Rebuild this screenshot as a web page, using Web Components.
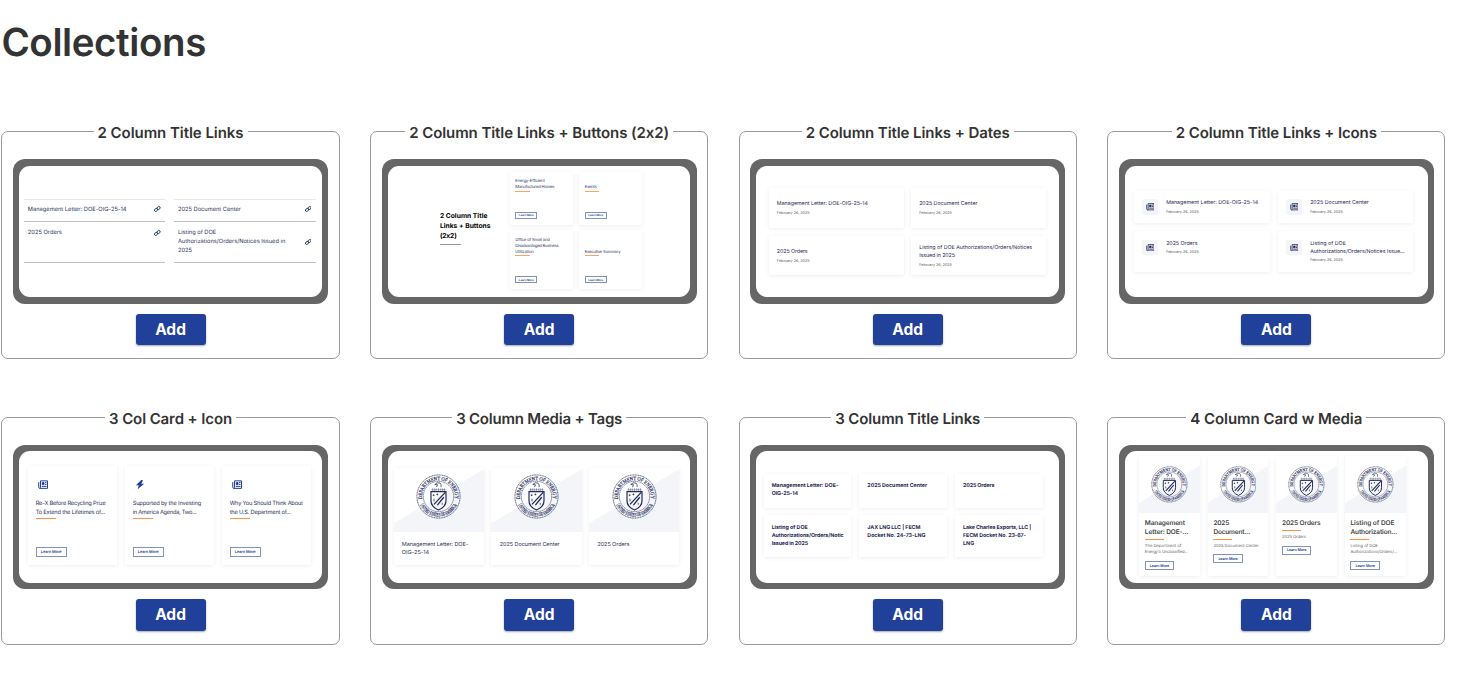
<!DOCTYPE html>
<html lang="en">
<head>
<meta charset="utf-8">
<title>Collections</title>
<style>
  body {
    margin: 0;
    background: #fff;
    color: #333;
    font-family: Inter, "Open Sans", sans-serif;
    text-rendering: geometricPrecision;
  }
</style>
</head>
<body>
<collections-page>
  <collection-card label="2 Column Title Links" w="146"><title-links></title-links></collection-card>
  <collection-card label="2 Column Title Links + Buttons (2x2)" w="261.5"><button-links></button-links></collection-card>
  <collection-card label="2 Column Title Links + Dates" w="204"><date-links></date-links></collection-card>
  <collection-card label="2 Column Title Links + Icons" w="201"><icon-links></icon-links></collection-card>
  <collection-card label="3 Col Card + Icon" w="123"><icon-cards></icon-cards></collection-card>
  <collection-card label="3 Column Media + Tags" w="166"><media-tags></media-tags></collection-card>
  <collection-card label="3 Column Title Links" w="145"><title-cards></title-cards></collection-card>
  <collection-card label="4 Column Card w Media" w="172"><media-cards></media-cards></collection-card>
</collections-page>

<script>
// Registers an element whose shadow root never changes.
function define(name, style, html) {
  customElements.define(name, class extends HTMLElement {
    constructor() {
      super();
      this.attachShadow({mode: 'open'});
      this.shadowRoot.innerHTML = `<style>${style}</style>${html}`;
    }
  });
}

const line = (w, text) => `<fit-line w="${w}">${text}</fit-line>`;

define('collections-page', `
  :host {
    display: block;
    padding-left: 1.4px;
  }
  h1 {
    margin: 0;
    padding: 19.2px 0 0;
    height: 102.8px;
    font-size: 38.5px;
    line-height: 48px;
    font-weight: 600;
  }
  main {
    display: grid;
    grid-template-columns: repeat(4, 338.3px);
    gap: 48.6px 30.3px;
  }
`, `
  <h1>${line(204.5, 'Collections')}</h1>
  <main><slot></slot></main>
`);

customElements.define('collection-card', class extends HTMLElement {
  constructor() {
    super();
    this.attachShadow({mode: 'open'});
  }

  connectedCallback() {
    this.shadowRoot.innerHTML = `
      <style>
        :host {
          display: block;
        }
        fieldset {
          box-sizing: border-box;
          height: 237px;
          min-inline-size: 0;
          margin: 0;
          padding: 17.3px 10.6px 0;
          border: 1px solid #999;
          border-radius: 7px;
        }
        legend {
          margin: 0 auto;
          padding: 1px 4px 0;
          font-size: 15px;
          line-height: 19px;
          font-weight: 600;
        }
        .frame {
          box-sizing: border-box;
          height: 144.5px;
          padding: 6.3px;
          border-radius: 12px;
          background: #666;
        }
        .screen {
          height: 100%;
          overflow: hidden;
          border-radius: 11px;
          background: #fff;
        }
        button {
          display: block;
          width: 70px;
          height: 31.5px;
          margin: 10.1px auto 0;
          padding: 0 0 1px;
          border: 0;
          border-radius: 3px;
          background: #204099;
          box-shadow: 0 1px 2px rgba(0, 0, 0, 0.35);
          color: #fff;
          font: 700 15.5px Inter, sans-serif;
        }
      </style>
      <fieldset>
        <legend>${line(this.getAttribute('w'), this.getAttribute('label'))}</legend>
        <div class="frame"><div class="screen"><slot></slot></div></div>
        <button>Add</button>
      </fieldset>
    `;
  }
});

define('white-card', `
  :host {
    display: flex;
    flex-direction: column;
    box-sizing: border-box;
    overflow: hidden;
    border-radius: 1.5px;
    background: #fff;
    box-shadow: 0 1px 4px rgba(0, 0, 0, 0.075);
  }
`, '<slot></slot>');

define('orange-rule', `
  :host {
    display: block;
    flex: none;
    width: var(--rule-width, 20px);
    height: 1px;
    background: var(--rule-color, #fb9344);
  }
`, '');

define('learn-more', `
  :host {
    display: flex;
    flex: none;
    align-items: center;
    justify-content: center;
    box-sizing: border-box;
    border: 0.7px solid #8291c5;
    color: #203f94;
    font-weight: 600;
    line-height: 1;
  }
`, '<slot></slot>');

define('link-icon', `
  :host {
    display: block;
    width: 6.6px;
    height: 6px;
  }
  svg {
    display: block;
    width: 100%;
    height: 100%;
  }
`, `
  <svg viewBox="0 0 22 20" fill="none" stroke="#17365d" stroke-width="3">
    <rect x="1" y="9" width="12" height="8" rx="4" transform="rotate(-35 7 13)"/>
    <rect x="9" y="3" width="12" height="8" rx="4" transform="rotate(-35 15 7)"/>
  </svg>
`);

define('news-icon', `
  :host {
    display: block;
    color: #204099;
  }
  svg {
    display: block;
    width: 100%;
    height: 100%;
  }
`, `
  <svg viewBox="0 0 20 18" fill="none" stroke="currentColor" stroke-width="2">
    <path d="M5 1.5h14v15H3.2Q5 16 5 14zM1.5 4v10q0 2 1.5 2.5"/>
    <path d="M8.5 5h3.5v4H8.5z" fill="currentColor"/>
    <path d="M14 5h3M14 8.5h3M7.5 12.5h9.5"/>
  </svg>
`);

define('bolt-icon', `
  :host {
    display: block;
    color: #204099;
  }
  svg {
    display: block;
    width: 100%;
    height: 100%;
  }
`, `
  <svg viewBox="0 0 14 18" fill="currentColor">
    <path d="M9.5 0L-1 10.5h5.5L2.5 18L15 7.5H9.5L13 0.5z"/>
  </svg>
`);

define('energy-seal', `
  :host {
    display: block;
  }
  svg {
    display: block;
    width: 100%;
    height: 100%;
    font: 400 14px "Liberation Serif", serif;
  }
`, `
  <svg viewBox="0 0 120 120" fill="none" stroke="#252b58">
    <defs>
      <path id="north" d="M16.5 67A44 44 0 1 1 103.5 67"/>
      <path id="south" d="M11 82A54 54 0 0 0 109 82"/>
    </defs>
    <circle cx="60" cy="60" r="57.5" stroke-width="2.2" stroke-dasharray="3 1.5"/>
    <circle cx="60" cy="60" r="40.5" stroke-width="1.5" stroke-dasharray="4 1"/>
    <g fill="#252b58" stroke="#252b58" stroke-width="0.5">
      <text textLength="150" lengthAdjust="spacingAndGlyphs"><textPath href="#north">DEPARTMENT OF ENERGY</textPath></text>
      <text textLength="122" lengthAdjust="spacingAndGlyphs"><textPath href="#south">UNITED STATES OF AMERICA</textPath></text>
    </g>
    <path d="M40 47h40v24q0 16-20 25q-20-9-20-25z" stroke-width="3.2"/>
    <path d="M48 81L78 49M57 83L74 62" stroke-width="3.5"/>
    <path d="M47 54v5M44.5 56.5h5M57 52v5M54.5 54.5h5M48 66v7M70 77v5" stroke-width="2"/>
    <path d="M41 42h38M44 38v7M49 38v7M54 38v7M60 38v7M66 38v7M71 38v7M76 38v7" stroke-width="1.5" opacity="0.7"/>
    <path d="M50 28q6-7 14-4q4 3 3 11M50 28l8 1M57 29q-1 4-3 6" stroke-width="2"/>
  </svg>
`);

// Media area: pale diagonal wedge with the seal over it.
define('seal-media', `
  :host {
    display: flex;
    flex: none;
    justify-content: center;
    align-items: flex-start;
    box-sizing: border-box;
    padding-top: var(--seal-top);
    background: var(--wedge);
  }
  energy-seal {
    width: var(--seal-size);
    height: var(--seal-size);
  }
`, '<energy-seal></energy-seal>');

define('title-links', `
  :host {
    display: grid;
    grid-template-columns: 141.8px 141.8px;
    grid-template-rows: 23px 41.1px;
    column-gap: 8.3px;
    padding: 33px 0 0 4.4px;
    font-size: 5.7px;
    line-height: 9px;
    color: #2b3260;
  }
  div {
    box-sizing: border-box;
    display: flex;
    align-items: flex-start;
    justify-content: space-between;
    padding: 6.8px 4.4px 0 4.2px;
    border-bottom: 0.8px solid #bfc1c3;
  }
  div:nth-of-type(-n+2) {
    padding-top: 5.6px;
    border-top: 0.8px solid #e9e9e9;
  }
  link-icon {
    margin-top: 1.3px;
  }
  .mid {
    margin-top: 10.2px;
  }
`, `
  <div>${line(98.7, 'Management Letter: DOE-OIG-25-14')}<link-icon></link-icon></div>
  <div>${line(63, '2025 Document Center')}<link-icon></link-icon></div>
  <div>${line(34, '2025 Orders')}<link-icon></link-icon></div>
  <div>
    <section>
      ${line(38.3, 'Listing of DOE')}
      ${line(107.3, 'Authorizations/Orders/Notices Issued in')}
      ${line(14, '2025')}
    </section>
    <link-icon class="mid"></link-icon>
  </div>
`);

define('button-links', `
  :host {
    display: grid;
    grid-template-columns: 63.7px 63.3px 63px;
    grid-template-rows: 52.5px 59.5px;
    gap: 5.2px 6px;
    padding: 6.7px 0 0 52px;
  }
  header {
    grid-row: 1 / 3;
    padding-top: 38.8px;
    color: #000;
    font-size: 6.7px;
    line-height: 10.1px;
    font-weight: 700;
  }
  header orange-rule {
    --rule-width: 21.3px;
    --rule-color: #8e97b4;
    margin-top: 2.3px;
  }
  white-card {
    justify-content: flex-end;
    padding: 0 5.8px 6px;
    font-size: 4.1px;
    line-height: 6px;
    color: #2b3260;
  }
  white-card orange-rule {
    --rule-width: 14.2px;
    margin: 0.5px 0 20.2px;
    opacity: 0.85;
  }
  learn-more {
    width: 22px;
    height: 7px;
    font-size: 2.9px;
  }
`, `
  <header>
    ${line(47.7, '2 Column Title')}
    ${line(50.7, 'Links + Buttons')}
    ${line(17.3, '(2x2)')}
    <orange-rule></orange-rule>
  </header>
  <white-card>
    ${line(29.3, 'Energy-Efficient')}
    ${line(39, 'Manufactured Homes')}
    <orange-rule></orange-rule>
    <learn-more>${line(15, 'Learn More')}</learn-more>
  </white-card>
  <white-card>
    ${line(12, 'Events')}
    <orange-rule></orange-rule>
    <learn-more>${line(15, 'Learn More')}</learn-more>
  </white-card>
  <white-card>
    ${line(34.3, 'Office of Small and')}
    ${line(43, 'Disadvantaged Business')}
    ${line(18.3, 'Utilization')}
    <orange-rule></orange-rule>
    <learn-more>${line(15, 'Learn More')}</learn-more>
  </white-card>
  <white-card>
    ${line(35.7, 'Executive Summary')}
    <orange-rule></orange-rule>
    <learn-more>${line(15, 'Learn More')}</learn-more>
  </white-card>
`);

const DATE = `<small>${line(32.7, 'February 26, 2025')}</small>`;

define('date-links', `
  :host {
    display: grid;
    grid-template-columns: 135px 134.7px;
    grid-template-rows: 40px 39.3px;
    gap: 8.2px 7.3px;
    padding: 22.3px 0 0 12.4px;
    font-size: 5.3px;
    line-height: 7.9px;
    color: #1f2756;
  }
  white-card {
    justify-content: center;
    padding: 1.2px 0 0 8px;
  }
  small {
    font-size: 3.8px;
    line-height: 7.4px;
    color: #555;
  }
`, `
  <white-card>${line(91, 'Management Letter: DOE-OIG-25-14')}${DATE}</white-card>
  <white-card>${line(58.3, '2025 Document Center')}${DATE}</white-card>
  <white-card>${line(30.7, '2025 Orders')}${DATE}</white-card>
  <white-card>
    ${line(113, 'Listing of DOE Authorizations/Orders/Notices')}
    ${line(35.7, 'Issued in 2025')}
    ${DATE}
  </white-card>
`);

define('icon-links', `
  :host {
    display: grid;
    grid-template-columns: 136px 135.7px;
    grid-template-rows: 32.5px 41px;
    gap: 7.8px 8px;
    padding: 25.3px 0 0 8.7px;
    font-size: 5.3px;
    line-height: 8.4px;
    color: #1f2756;
  }
  white-card {
    flex-direction: row;
    padding: 8.4px 0 0 8.2px;
  }
  .tile {
    display: grid;
    place-items: center;
    flex: none;
    width: 16px;
    height: 15.7px;
    margin-right: 8.2px;
    border-radius: 1.5px;
    background: #f4f5f9;
  }
  news-icon {
    width: 8.5px;
    height: 7.5px;
    color: #252b58;
  }
  small {
    display: block;
    font-size: 3.8px;
    color: #555;
  }
`, `
  <white-card>
    <div class="tile"><news-icon></news-icon></div>
    <div>${line(92, 'Management Letter: DOE-OIG-25-14')}${DATE}</div>
  </white-card>
  <white-card>
    <div class="tile"><news-icon></news-icon></div>
    <div>${line(58.7, '2025 Document Center')}${DATE}</div>
  </white-card>
  <white-card>
    <div class="tile"><news-icon></news-icon></div>
    <div>${line(31.3, '2025 Orders')}${DATE}</div>
  </white-card>
  <white-card>
    <div class="tile"><news-icon></news-icon></div>
    <div>
      ${line(35.7, 'Listing of DOE')}
      ${line(94.3, 'Authorizations/Orders/Notices Issue...')}
      ${DATE}
    </div>
  </white-card>
`);

define('icon-cards', `
  :host {
    display: grid;
    grid-template-columns: repeat(3, 89px);
    grid-template-rows: 99.3px;
    column-gap: 8px;
    padding: 14.4px 0 0 8.4px;
    font-size: 5.7px;
    line-height: 8.6px;
    color: #2b3260;
  }
  white-card {
    padding: 14.2px 8px 0;
  }
  news-icon, bolt-icon {
    flex: none;
    width: 10px;
    height: 9.2px;
    margin: 0 0 11.2px 2.3px;
  }
  orange-rule {
    margin: 0.3px 0 28px;
  }
  learn-more {
    width: 31px;
    height: 10.2px;
    font-size: 3.9px;
  }
`, `
  <white-card>
    <news-icon></news-icon>
    ${line(70, 'Re-X Before Recycling Prize')}
    ${line(69.3, 'To Extend the Lifetimes of...')}
    <orange-rule></orange-rule>
    <learn-more>${line(20.7, 'Learn More')}</learn-more>
  </white-card>
  <white-card>
    <bolt-icon></bolt-icon>
    ${line(68.3, 'Supported by the Investing')}
    ${line(63.7, 'in America Agenda, Two...')}
    <orange-rule></orange-rule>
    <learn-more>${line(20.7, 'Learn More')}</learn-more>
  </white-card>
  <white-card>
    <news-icon></news-icon>
    ${line(73, 'Why You Should Think About')}
    ${line(61, 'the U.S. Department of...')}
    <orange-rule></orange-rule>
    <learn-more>${line(20.7, 'Learn More')}</learn-more>
  </white-card>
`);

define('media-tags', `
  :host {
    display: grid;
    grid-template-columns: repeat(3, 90.2px);
    grid-template-rows: 96.7px;
    column-gap: 7.6px;
    padding: 17px 0 0 5.7px;
    font-size: 5.5px;
    line-height: 8.4px;
    color: #2b3260;
  }
  seal-media {
    height: 63.7px;
    margin-bottom: 9.2px;
    --seal-top: 5.5px;
    --seal-size: 45px;
    --wedge: linear-gradient(149deg, #fff 46.5%, #f4f5f9 47%);
  }
  fit-line {
    margin-left: 8.3px;
  }
`, `
  <white-card>
    <seal-media></seal-media>
    ${line(66.3, 'Management Letter: DOE-')}
    ${line(27.3, 'OIG-25-14')}
  </white-card>
  <white-card><seal-media></seal-media>${line(60, '2025 Document Center')}</white-card>
  <white-card><seal-media></seal-media>${line(32, '2025 Orders')}</white-card>
`);

define('title-cards', `
  :host {
    display: grid;
    grid-template-columns: repeat(3, 87.8px);
    grid-template-rows: 34px 41.7px;
    gap: 7.7px 7.9px;
    padding: 22.4px 0 0 7.2px;
    font-size: 5.3px;
    line-height: 8.3px;
    font-weight: 700;
    color: #1f2756;
  }
  white-card {
    padding: 8.6px 7.5px 0 8px;
  }
`, `
  <white-card>${line(66.7, 'Management Letter: DOE-')}${line(26.3, 'OIG-25-14')}</white-card>
  <white-card>${line(59.7, '2025 Document Center')}</white-card>
  <white-card>${line(31.3, '2025 Orders')}</white-card>
  <white-card>
    ${line(36, 'Listing of DOE')}
    ${line(72, 'Authorizations/Orders/Notic')}
    ${line(36.3, 'Issued in 2025')}
  </white-card>
  <white-card>${line(53, 'JAX LNG LLC | FECM')}${line(58, 'Docket No. 24-73-LNG')}</white-card>
  <white-card>
    ${line(68, 'Lake Charles Exports, LLC |')}
    ${line(63, 'FECM Docket No. 23-67-')}
    ${line(11.3, 'LNG')}
  </white-card>
`);

define('media-cards', `
  :host {
    display: grid;
    grid-template-columns: repeat(4, 60.9px);
    grid-template-rows: 120.6px;
    column-gap: 7.65px;
    padding: 4.4px 0 0 14px;
  }
  seal-media {
    height: 57px;
    margin-bottom: 6.5px;
    --seal-top: 10.3px;
    --seal-size: 36.8px;
    --wedge: linear-gradient(148.5deg, #fff 49.5%, #f4f5f9 50%);
  }
  h4, p {
    margin: 0 0 0 5.8px;
  }
  h4 {
    font-size: 6.5px;
    line-height: 8.7px;
    font-weight: 600;
    color: #444;
  }
  p {
    font-size: 4.2px;
    line-height: 6.7px;
    color: #666;
  }
  orange-rule {
    --rule-width: 19px;
    margin: 2.2px 0 3.9px 5.8px;
  }
  learn-more {
    width: 29.3px;
    height: 9px;
    margin: 4.2px 0 0 5.8px;
    font-size: 3.7px;
  }
`, `
  <white-card>
    <seal-media></seal-media>
    <h4>${line(40, 'Management')}${line(43.7, 'Letter: DOE-...')}</h4>
    <orange-rule></orange-rule>
    <p>${line(36.3, 'The Department of')}${line(42.7, 'Energy\'s Unclassified...')}</p>
    <learn-more>${line(19.3, 'Learn More')}</learn-more>
  </white-card>
  <white-card>
    <seal-media></seal-media>
    <h4>${line(15.7, '2025')}${line(36.7, 'Document...')}</h4>
    <orange-rule></orange-rule>
    <p>${line(45.3, '2025 Document Center')}</p>
    <learn-more>${line(19.3, 'Learn More')}</learn-more>
  </white-card>
  <white-card>
    <seal-media></seal-media>
    <h4>${line(38.7, '2025 Orders')}</h4>
    <orange-rule></orange-rule>
    <p>${line(24, '2025 Orders')}</p>
    <learn-more>${line(19.3, 'Learn More')}</learn-more>
  </white-card>
  <white-card>
    <seal-media></seal-media>
    <h4>${line(44, 'Listing of DOE')}${line(46.7, 'Authorization...')}</h4>
    <orange-rule></orange-rule>
    <p>${line(27.3, 'Listing of DOE')}${line(46.7, 'Authorizations/Orders/...')}</p>
    <learn-more>${line(19.3, 'Learn More')}</learn-more>
  </white-card>
`);

// One line of text tracked out (or in) to the width in its w attribute.
// Defined last, so that every font size around it is already in place.
customElements.define('fit-line', class extends HTMLElement {
  constructor() {
    super();
    this.attachShadow({mode: 'open'});
    this.shadowRoot.innerHTML = `
      <style>
        :host {
          display: block;
          white-space: nowrap;
        }
      </style>
      <span><slot></slot></span>
    `;
  }

  connectedCallback() {
    const span = this.shadowRoot.querySelector('span');
    const natural = span.getBoundingClientRect().width;
    const gap = (this.getAttribute('w') - natural) / this.textContent.length;
    span.style.letterSpacing = `${gap}px`;
  }
});
</script>
</body>
</html>
